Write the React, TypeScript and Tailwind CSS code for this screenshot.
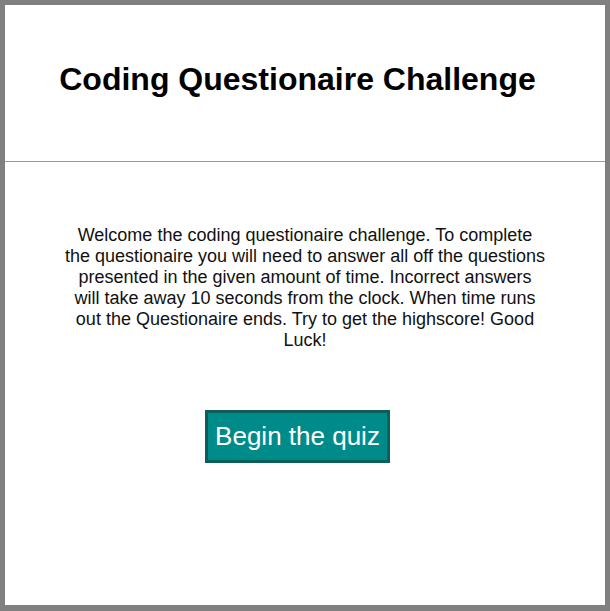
const App = () => {
  return (
    <div className="h-[611px] w-[610px] border-[5px] border-b-[6px] border-[#808080] bg-white font-['Liberation_Sans',Arial,sans-serif] text-black flex flex-col">
      <header className="h-[157px] border-b border-[#999999] flex items-center justify-center pr-[15px] pb-[8px]">
        <h1 className="text-[32px] font-bold">Coding Questionaire Challenge</h1>
      </header>

      <main className="flex flex-col items-center">
        <p className="mt-[63px] w-[482px] text-center text-[18px] leading-[21px] text-[#111]">
          Welcome the coding questionaire challenge. To complete the questionaire you will need to answer all off the questions presented in the given amount of time. Incorrect answers will take away 10 seconds from the clock. When time runs out the Questionaire ends. Try to get the highscore! Good Luck!
        </p>
        <button className="mt-[59px] mr-[15px] h-[53px] w-[185px] bg-[#008b8b] border-[3px] border-[#0b5e5a] text-white text-[26px]">
          Begin the quiz
        </button>
      </main>
    </div>
  );
};

export default App;
